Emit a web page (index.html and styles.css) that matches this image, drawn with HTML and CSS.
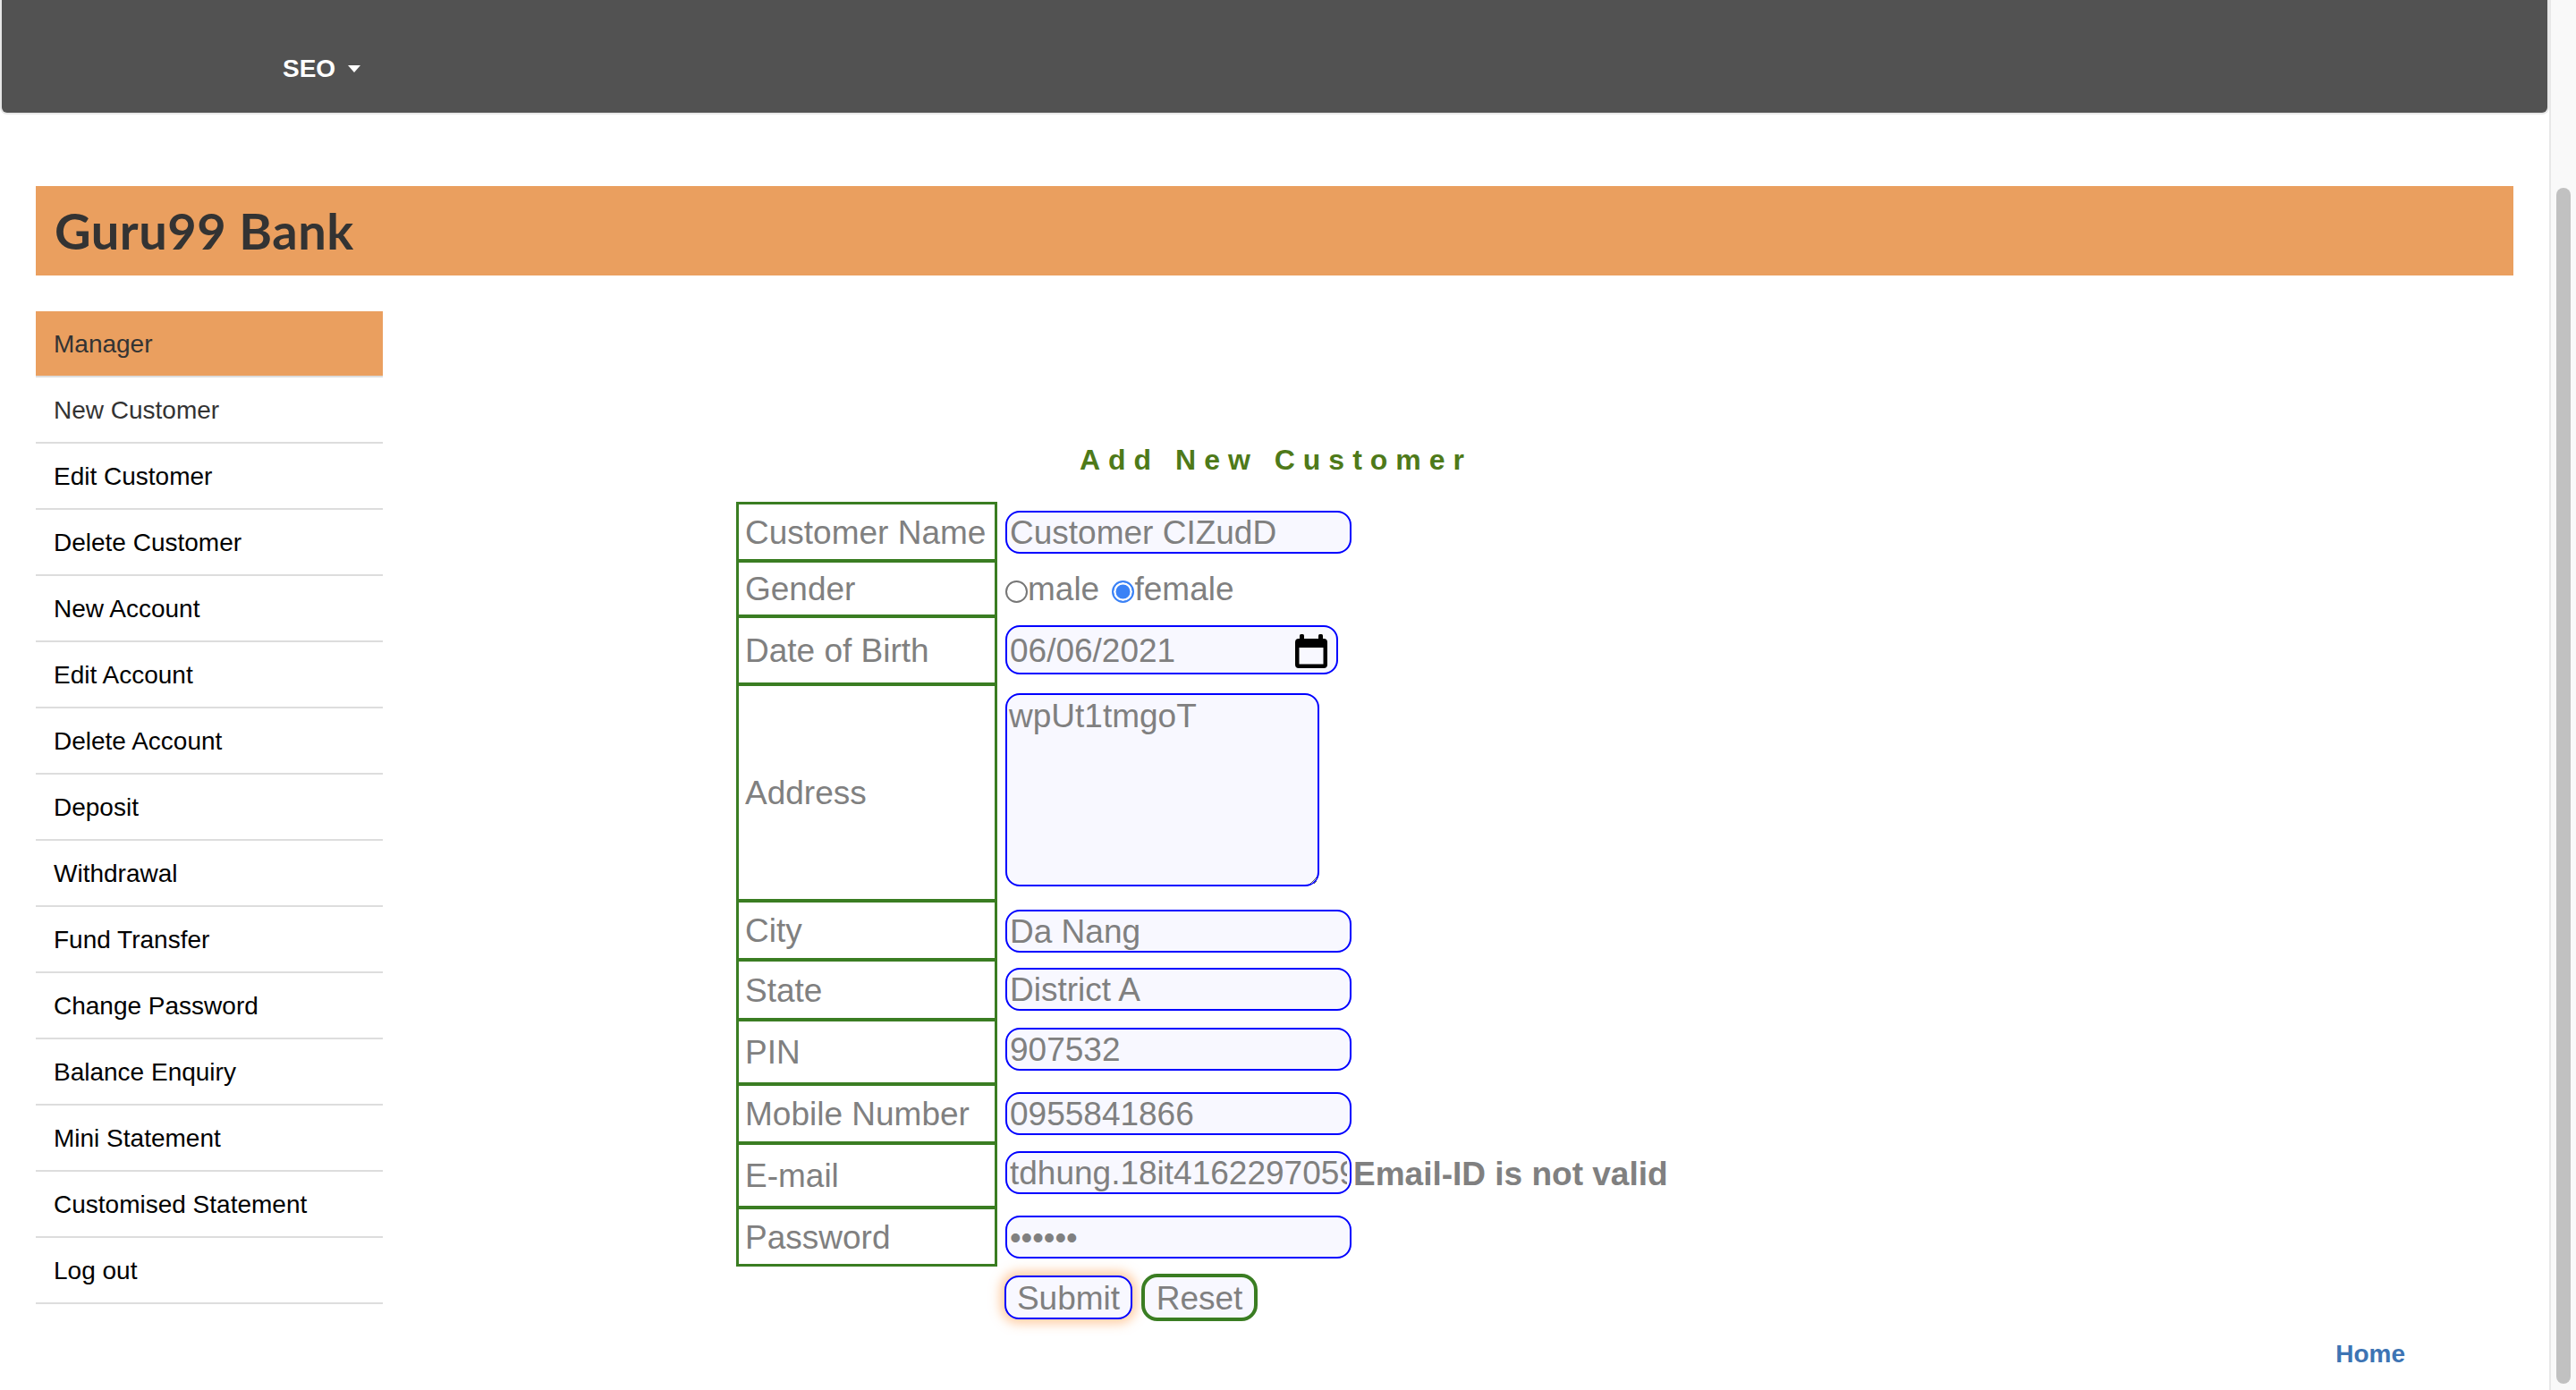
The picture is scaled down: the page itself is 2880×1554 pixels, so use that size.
FILE: index.html
```html
<!DOCTYPE html>
<html lang="en">
<head>
<meta charset="utf-8">
<title>Guru99 Bank Manager HomePage</title>
<link rel="stylesheet" href="styles.css">
</head>
<body>
<div class="viewport">
  <div class="page">
    <nav class="navbar">
      <a class="nav-link" href="#">SEO<span class="caret"></span></a>
    </nav>
    <header class="brand-bar">
      <h2 class="brand">Guru99 Bank</h2>
    </header>
    <div class="layout">
      <ul class="menu">
        <li class="menu-head">Manager</li>
        <li class="visited">New Customer</li>
        <li>Edit Customer</li>
        <li>Delete Customer</li>
        <li>New Account</li>
        <li>Edit Account</li>
        <li>Delete Account</li>
        <li>Deposit</li>
        <li>Withdrawal</li>
        <li>Fund Transfer</li>
        <li>Change Password</li>
        <li>Balance Enquiry</li>
        <li>Mini Statement</li>
        <li>Customised Statement</li>
        <li>Log out</li>
      </ul>
      <main class="main">
        <section class="form-area">
          <p class="heading3">Add New Customer</p>
          <form class="form-grid">
            <div class="lbl first">Customer Name</div>
            <div class="fld"><input class="txt" type="text" value="Customer CIZudD"></div>

            <div class="lbl">Gender</div>
            <div class="fld mid"><div class="radios"><input class="radio" type="radio" name="g">male <input class="radio second" type="radio" name="g" checked>female</div></div>

            <div class="lbl">Date of Birth</div>
            <div class="fld">
              <div class="date-box">
                <input class="date-input" type="text" value="06/06/2021">
                <svg class="cal" width="36" height="38" viewBox="0 0 36 38">
                  <rect x="5" y="0" width="5" height="9" rx="1.5" fill="#000"/>
                  <rect x="26" y="0" width="5" height="9" rx="1.5" fill="#000"/>
                  <path fill="#000" fill-rule="evenodd" d="M4 5h28a4 4 0 0 1 4 4v25a4 4 0 0 1-4 4H4a4 4 0 0 1-4-4V9a4 4 0 0 1 4-4zM4.5 15v18.5h27V15z"/>
                </svg>
              </div>
            </div>

            <div class="lbl">Address</div>
            <div class="fld"><textarea class="area">wpUt1tmgoT</textarea></div>

            <div class="lbl">City</div>
            <div class="fld"><input class="txt" type="text" value="Da Nang"></div>

            <div class="lbl">State</div>
            <div class="fld t9"><input class="txt" type="text" value="District A"></div>

            <div class="lbl">PIN</div>
            <div class="fld t9"><input class="txt" type="text" value="907532"></div>

            <div class="lbl">Mobile Number</div>
            <div class="fld t9"><input class="txt" type="text" value="0955841866"></div>

            <div class="lbl">E-mail</div>
            <div class="fld t9"><input class="txt" type="text" value="tdhung.18it4162297059@gmail.com"><span class="err">Email-ID is not valid</span></div>

            <div class="lbl last">Password</div>
            <div class="fld t9"><input class="txt pass" type="text" value="••••••"></div>
          </form>
          <div class="btns">
            <button class="btn submit" type="button">Submit</button>
            <button class="btn reset" type="button">Reset</button>
          </div>
        </section>
        <footer class="foot"><a class="home" href="#">Home</a></footer>
      </main>
    </div>
  </div>
  <div class="scrollbar"><div class="thumb"></div></div>
</div>
</body>
</html>
```

FILE: styles.css
```css
html, body {
  margin: 0;
  height: 100%;
  overflow: hidden;
  background: #fff;
}

body {
  font-family: "Liberation Sans", Arial, Helvetica, sans-serif;
  color: #000;
}

.viewport {
  display: flex;
  height: 1554px;
}

.page {
  width: 2850px;
  flex: none;
}

/* top navbar */
.navbar {
  box-sizing: border-box;
  height: 128px;
  background: #525252;
  border: 2px solid #e7e7e7;
  border-top: 0;
  border-radius: 0 0 8px 8px;
  padding: 57px 0 0 314px;
}

.nav-link {
  display: inline-flex;
  align-items: center;
  height: 40px;
  line-height: 40px;
  font-size: 28px;
  font-weight: 700;
  color: #fff;
  text-decoration: none;
}

.caret {
  display: inline-block;
  width: 0;
  height: 0;
  margin-left: 14px;
  border-top: 8px solid #fff;
  border-left: 7px solid transparent;
  border-right: 7px solid transparent;
}

/* brand header */
.brand-bar {
  margin: 80px 40px 0;
  height: 100px;
  background: #ea9f5f;
  display: flex;
  align-items: center;
  padding-left: 21px;
}

.brand {
  margin: 0;
  font-family: Lato, "Open Sans", sans-serif;
  font-weight: 700;
  font-size: 56px;
  line-height: 1;
  color: #333;
  letter-spacing: 0.5px;
}

/* body layout */
.layout {
  display: flex;
  margin-top: 40px;
  padding: 0 40px;
}

.menu {
  list-style: none;
  margin: 0;
  padding: 0;
  width: 388px;
  flex: none;
}

.menu li {
  height: 70px;
  border-bottom: 2px solid #ddd;
  display: flex;
  align-items: center;
  padding: 2px 0 0 20px;
  font-size: 28px;
  color: #000;
}

.menu li.menu-head {
  background: #ea9f5f;
  color: #333;
}

.menu li.visited {
  color: #333;
}

.main {
  flex: 1;
  display: flex;
  flex-direction: column;
}

.form-area {
  margin-left: 395px;
  width: 1198px;
}

.heading3 {
  margin: 146px 0 0;
  padding-left: 9px;
  line-height: 40px;
  font-size: 32px;
  font-weight: 700;
  letter-spacing: 9px;
  color: #4e7a19;
  text-align: center;
}

.form-grid {
  margin: 27px 0 0;
  display: grid;
  grid-template-columns: 292px auto;
  grid-template-rows: 66px 62px 76px 242px 66px 67px 72px 66px 72px 66px;
  color: #808080;
  font-size: 37px;
}

.lbl {
  box-sizing: border-box;
  border: 2px solid #3a7d22;
  border-left-width: 3px;
  border-right-width: 3px;
  display: flex;
  align-items: center;
  padding: 2px 0 0 7px;
  white-space: nowrap;
}

.lbl.first {
  border-top-width: 3px;
}

.lbl.last {
  border-bottom-width: 3px;
}

.fld {
  display: flex;
  align-items: flex-start;
  padding: 10px 0 0 9px;
}

.fld.t9 {
  padding-top: 9px;
}

.fld.mid {
  align-items: center;
  padding-top: 2px;
}

.radios {
  line-height: 42px;
  white-space: nowrap;
}

.radio {
  -webkit-appearance: none;
  appearance: none;
  box-sizing: border-box;
  width: 25px;
  height: 25px;
  margin: 0;
  border: 2px solid #767676;
  border-radius: 50%;
  background: #fff;
  vertical-align: -3px;
}

.radio.second {
  margin-left: 4px;
}

.radio:checked {
  border-color: #3b82f6;
  background: #3b82f6;
  box-shadow: inset 0 0 0 2.5px #fff;
}

.txt {
  box-sizing: border-box;
  width: 387px;
  height: 48px;
  margin: 0;
  padding: 2px 3px 0;
  border: 2px solid #00f;
  border-radius: 16px;
  background: #f8f8ff;
  font-family: "Liberation Sans", Arial, Helvetica, sans-serif;
  font-size: 37px;
  color: #808080;
  outline: none;
}

.pass {
  font-size: 36px;
  padding-left: 3px;
}

.err {
  line-height: 48px;
  padding-top: 2px;
  margin-left: 2px;
  font-weight: 700;
  color: #808080;
  white-space: nowrap;
}

.date-box {
  box-sizing: border-box;
  width: 372px;
  height: 55px;
  display: flex;
  align-items: center;
  padding: 0 10px 0 3px;
  border: 2px solid #00f;
  border-radius: 16px;
  background: #f8f8ff;
}

.date-input {
  flex: 1;
  min-width: 0;
  margin: 0;
  padding: 2px 0 0;
  border: 0;
  background: transparent;
  font-family: "Liberation Sans", Arial, Helvetica, sans-serif;
  font-size: 37px;
  color: #808080;
  outline: none;
}

.cal {
  flex: none;
  display: block;
  margin-top: 2px;
}

.area {
  box-sizing: border-box;
  width: 351px;
  height: 216px;
  margin: 0;
  padding: 3px 2px 2px;
  border: 2px solid #00f;
  border-radius: 16px;
  background: #f8f8ff;
  font-family: "Liberation Sans", Arial, Helvetica, sans-serif;
  font-size: 37px;
  color: #808080;
  outline: none;
}

.btns {
  display: flex;
  align-items: center;
  margin: 8px 0 0 300px;
}

.btn {
  box-sizing: border-box;
  margin: 0;
  padding: 2px 0 0;
  background: #f8f8ff;
  font-family: "Liberation Sans", Arial, Helvetica, sans-serif;
  font-size: 37px;
  color: #808080;
  cursor: pointer;
}

.submit {
  width: 143px;
  height: 49px;
  border: 2px solid #00f;
  border-radius: 16px;
  box-shadow: 0 0 12px 5px rgba(255, 160, 80, 0.5);
}

.reset {
  width: 130px;
  height: 53px;
  margin-left: 10px;
  border: 4px solid #3a7d22;
  border-radius: 18px;
}

.foot {
  margin-top: 17px;
  padding-right: 121px;
  text-align: right;
  line-height: 40px;
}

.home {
  font-size: 28px;
  font-weight: 700;
  color: #3d74b4;
  text-decoration: none;
}

/* fake scrollbar strip */
.scrollbar {
  box-sizing: border-box;
  width: 30px;
  flex: none;
  border-left: 2px solid #e8e8e8;
  background: #f9f9f9;
  padding-left: 6px;
}

.thumb {
  width: 16px;
  height: 1337px;
  margin-top: 210px;
  border-radius: 8px;
  background: #c1c1c1;
}
```
